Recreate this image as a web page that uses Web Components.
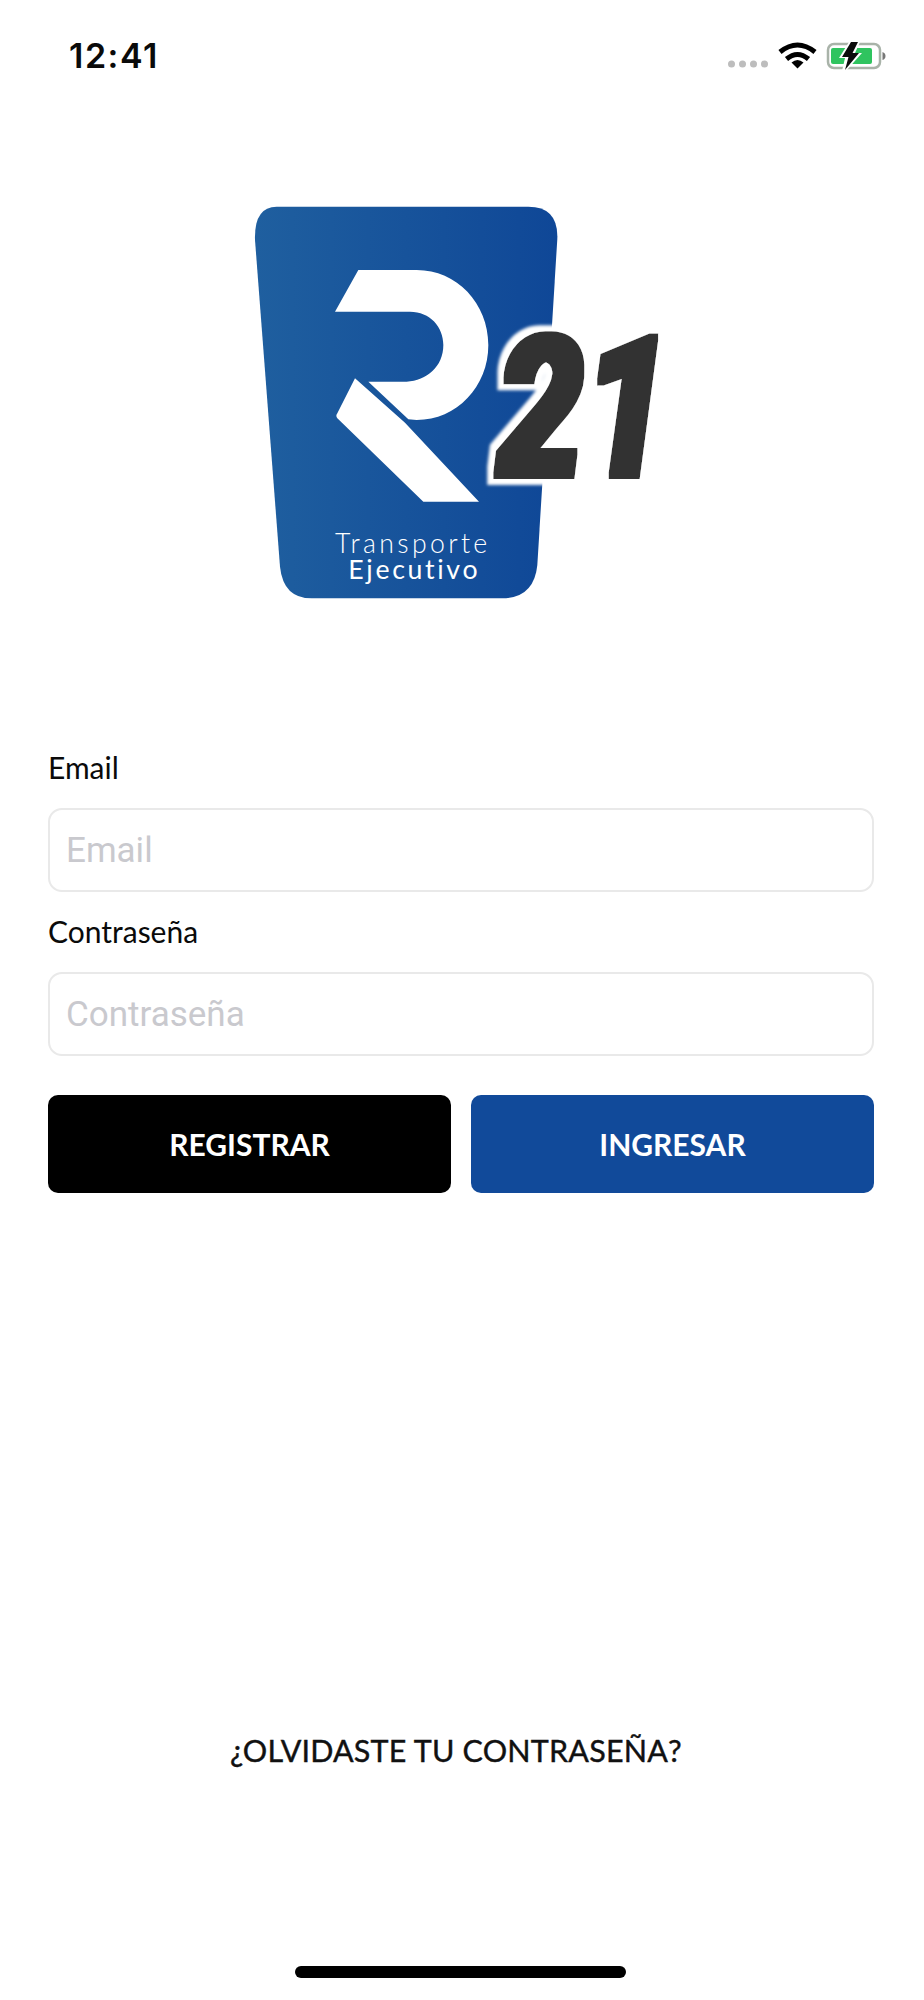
<!DOCTYPE html>
<html lang="es">
<head>
<meta charset="UTF-8">
<title>R21 Transporte Ejecutivo</title>
<style>
  html, body { margin: 0; background: #fff; }
</style>
</head>
<body>
<login-screen>
  <status-bar slot="top" time="12:41"></status-bar>
  <brand-logo slot="top"></brand-logo>

  <form-field label="Email" hint="Email"></form-field>
  <form-field label="Contraseña" hint="Contraseña"></form-field>
  <button-row>
    <action-button style="--bg:#000">REGISTRAR</action-button>
    <action-button style="--bg:#114a9a">INGRESAR</action-button>
  </button-row>

  <span slot="forgot">¿OLVIDASTE TU CONTRASEÑA?</span>
</login-screen>

<script>
  class LoginScreen extends HTMLElement {
    connectedCallback() {
      this.attachShadow({mode: 'open'});
      this.shadowRoot.innerHTML = `
      <style>
        :host { display: flex; flex-direction: column; height: 2000px; background: #fff; color: #000; font-family: Lato, "Liberation Sans", sans-serif; }
        .form { display: flex; flex-direction: column; margin-top: 139px; padding: 0 50px 0 48px; }
        .spacer { flex: 1; }
        .forgot { text-align: center; padding-right: 12px; font-size: 30.500px; font-weight: 400; -webkit-text-stroke: .4px #111; line-height: 36px; color: #111; margin-bottom: 198px; letter-spacing: .2px; }
        .home { align-self: center; width: 331px; height: 12px; border-radius: 6px; background: #000; margin: 0 0 22px -3px; }
      </style>
      <slot name="top"></slot>
      <div class="form"><slot></slot></div>
      <div class="spacer"></div>
      <div class="forgot"><slot name="forgot"></slot></div>
      <div class="home"></div>`;
    }
  }

  class StatusBar extends HTMLElement {
    connectedCallback() {
      this.attachShadow({mode: 'open'});
      this.shadowRoot.innerHTML = `
      <style>
        :host { display: flex; align-items: flex-start; justify-content: space-between; height: 110px; padding: 36px 38px 0 69px; box-sizing: border-box; }
        .time { font: 600 34px/40px Inter, "Liberation Sans", sans-serif; letter-spacing: 1.500px; color: #0a0a0a; }
        svg { display: block; margin-top: 5px; }
      </style>
      <span class="time">${this.getAttribute('time')}</span>
      <svg width="159" height="30" viewBox="0 0 159 30">
        <g fill="#bdbdbd">
          <circle cx="4.500" cy="23" r="3.500"/><circle cx="15.500" cy="23" r="3.500"/><circle cx="26.500" cy="23" r="3.500"/><circle cx="37.500" cy="23" r="3.500"/>
        </g>
        <!-- wifi -->
        <g fill="none" stroke="#000" stroke-width="5">
          <path d="M53 11 Q70.500 -3 88 11"/>
          <path d="M59.500 18 Q70.500 9 81.500 18"/>
        </g>
        <path d="M64.500 21.500 Q70.500 16.500 76.500 21.500 L70.500 27.500Z" fill="#000"/>
        <!-- battery -->
        <rect x="101" y="3" width="52" height="24" rx="6" fill="#fff" stroke="#a9b3a9" stroke-width="2.500"/>
        <rect x="104" y="7" width="41" height="16" rx="2" fill="#2fc45f"/>
        <path d="M155.500 11 Q158.500 12 158.500 15 Q158.500 18 155.500 19Z" fill="#777"/>
        <path d="M122 1 L112 17 H118 L115 30 H119 L135 12 H128 L133 1Z" fill="#fff"/>
        <path d="M124 1 L115 16 H121.500 L118 29 L132 12 H125.500 L131 1Z" fill="#0c0c0c"/>
      </svg>`;
    }
  }

  class BrandLogo extends HTMLElement {
    connectedCallback() {
      this.attachShadow({mode: 'open'});
      // viewBox is 3x so the shapes stay easy to tweak
      this.shadowRoot.innerHTML = `
      <style>
        :host { display: block; height: 420px; margin: 80px 0 0 230px; }
        svg { display: block; overflow: visible; }
        text { font-family: Lato, "Liberation Sans", sans-serif; }
        .num { font-family: Roboto, "Liberation Sans", sans-serif; font-weight: 900; font-style: italic; }
      </style>
      <svg width="450" height="420" viewBox="0 0 1350 1260">
        <defs>
          <linearGradient id="blue" x1="0" x2="1" y1="0" y2="0">
            <stop offset="0" stop-color="#1f5f9f"/>
            <stop offset="1" stop-color="#0f4797"/>
          </linearGradient>
          <filter id="halo" filterUnits="userSpaceOnUse" x="700" y="350" width="650" height="600">
            <feMorphology in="SourceAlpha" operator="dilate" radius="26" result="wide"/>
            <feGaussianBlur in="wide" stdDeviation="4" result="soft"/>
            <feFlood flood-color="#fff"/>
            <feComposite in2="soft" operator="in" result="white"/>
            <feMorphology in="SourceGraphic" operator="dilate" radius="9" result="fat"/>
            <feGaussianBlur in="fat" stdDeviation="2" result="fatsoft"/>
            <feMerge>
              <feMergeNode in="white"/>
              <feMergeNode in="fatsoft"/>
            </feMerge>
          </filter>
        </defs>
        <path d="M140 50 H895 Q985 50 982 145 L922 1125 Q912 1225 815 1225 H245 Q160 1225 150 1130 L75 150 Q72 50 140 50Z" fill="url(#blue)"/>
        <!-- R bowl -->
        <path d="M385 240 H560 C680 240 775 340 775 465 C775 590 680 690 560 690 L535 688 L415 575 H530 C590 572 640 530 640 465 C640 410 600 365 540 365 H315Z" fill="#fff"/>
        <!-- R leg -->
        <path d="M375 565 L525 698 L747 935 H580 L322 685 Q316 678 322 670Z" fill="#fff"/>
        <!-- 21 -->
        <g filter="url(#halo)">
          <text class="num" transform="translate(800 859) scale(.78 .98)" font-size="600" fill="#333" letter-spacing="-6">21</text>
        </g>
        <text font-size="80" fill="#fff">
          <tspan x="315" y="1090" font-weight="300" letter-spacing="10">Transporte</tspan>
          <tspan x="355" y="1166" font-weight="400" letter-spacing="8">Ejecutivo</tspan>
        </text>
      </svg>`;
    }
  }

  class FormField extends HTMLElement {
    connectedCallback() {
      this.attachShadow({mode: 'open'});
      this.shadowRoot.innerHTML = `
      <style>
        :host { display: block; }
        label { display: block; font-size: 30px; line-height: 36px; color: #0a0a0a; }
        .box { box-sizing: border-box; height: 84px; margin: 23px 0 21px; border: 2px solid #e9e9e9; border-radius: 14px; padding: 1px 0 0 16px; display: flex; align-items: center; font: 400 35px Roboto, "Liberation Sans", sans-serif; color: #c9c9ce; }
      </style>
      <label>${this.getAttribute('label')}</label>
      <div class="box">${this.getAttribute('hint')}</div>`;
    }
  }

  class ButtonRow extends HTMLElement {
    connectedCallback() {
      this.attachShadow({mode: 'open'});
      this.shadowRoot.innerHTML = `
      <style>
        :host { display: grid; grid-template-columns: 1fr 1fr; gap: 20px; margin-top: 18px; }
      </style>
      <slot></slot>`;
    }
  }

  class ActionButton extends HTMLElement {
    connectedCallback() {
      this.attachShadow({mode: 'open'});
      this.shadowRoot.innerHTML = `
      <style>
        :host { display: flex; align-items: center; justify-content: center; height: 98px; border-radius: 10px; background: var(--bg); color: #fff; font-size: 30px; font-weight: 700; }
      </style>
      <slot></slot>`;
    }
  }

  customElements.define('login-screen', LoginScreen);
  customElements.define('status-bar', StatusBar);
  customElements.define('brand-logo', BrandLogo);
  customElements.define('form-field', FormField);
  customElements.define('button-row', ButtonRow);
  customElements.define('action-button', ActionButton);
</script>
</body>
</html>
